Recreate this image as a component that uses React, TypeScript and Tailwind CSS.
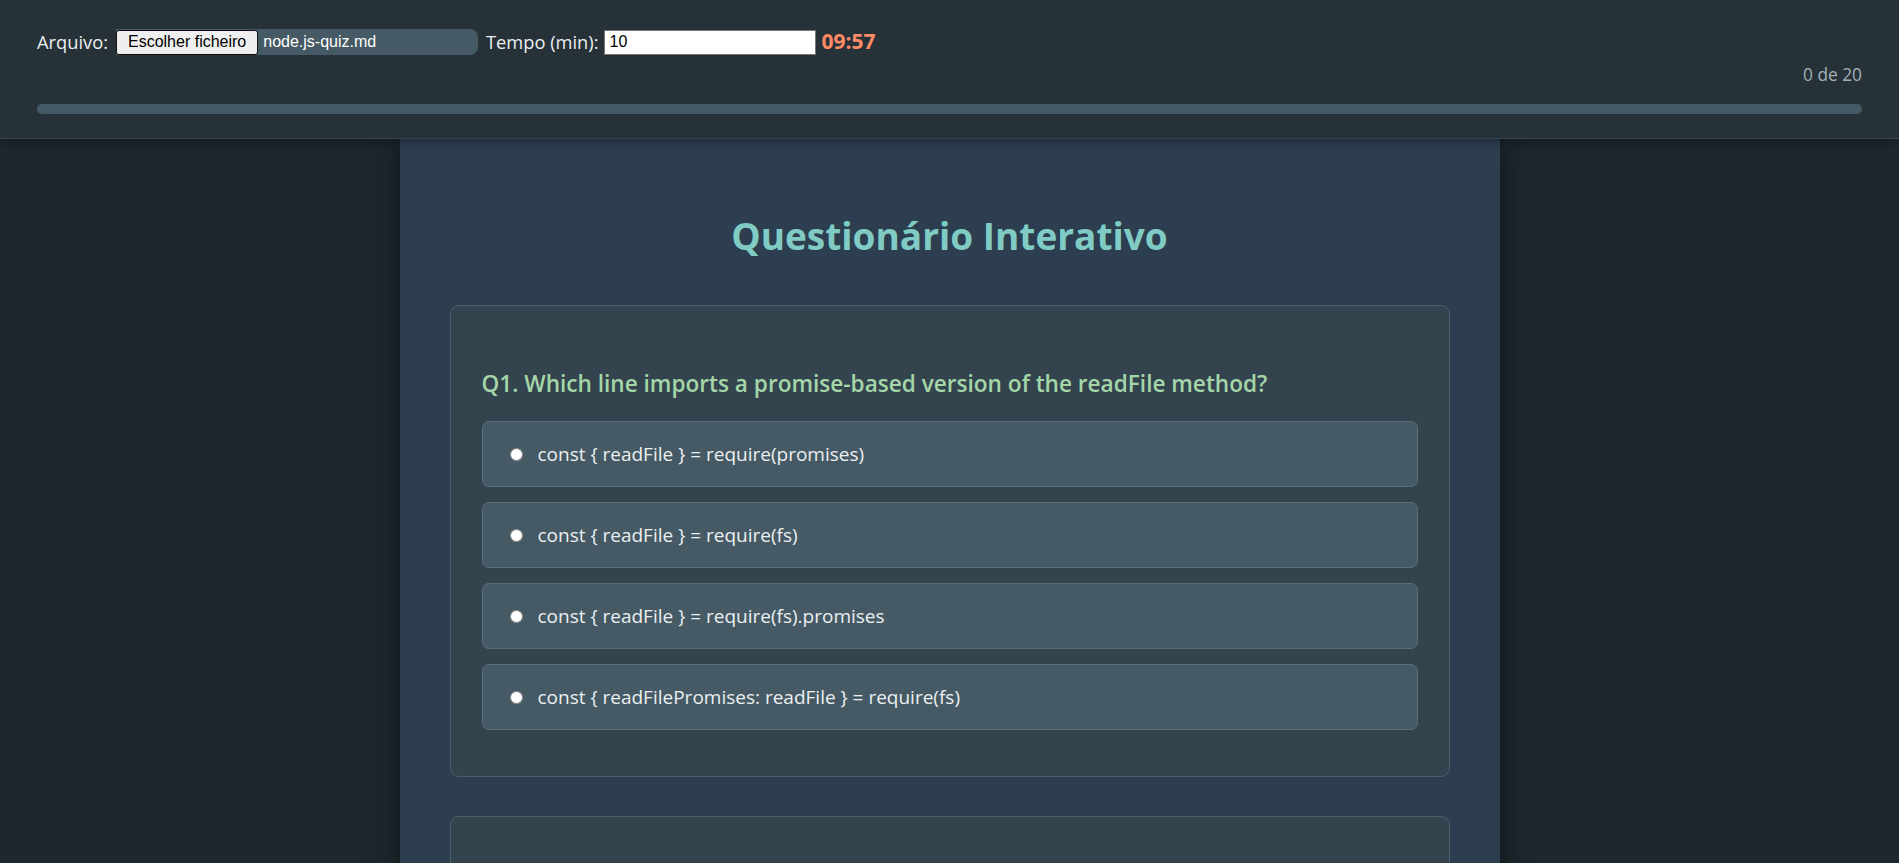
import { useState } from 'react'

const questions = [
  {
    id: 1,
    text: 'Which line imports a promise-based version of the readFile method?',
    options: [
      'const { readFile } = require(promises)',
      'const { readFile } = require(fs)',
      'const { readFile } = require(fs).promises',
      'const { readFilePromises: readFile } = require(fs)',
    ],
  },
  {
    id: 2,
    text: 'Which argument comes first in an error-first callback?',
    options: [
      'The error object',
      'The result value',
      'The callback itself',
      'None of the above',
    ],
  },
]

export default function App() {
  const [answers, setAnswers] = useState<Record<number, number>>({})

  return (
    <div className="min-h-screen bg-[#1d272d] font-['Open_Sans',sans-serif]">
      {/* Top bar */}
      <header className="relative z-10 border-b border-[#37474f] bg-[#263238] px-[37px] pt-[29px] pb-[24px] shadow-[0_2px_12px_rgba(0,0,0,0.35)]">
        <div className="flex h-[26px] items-center">
          <span className="text-[18.3px] text-[#eceff1]">Arquivo:</span>
          <div className="ml-[8px] flex h-[26px] w-[362px] items-center rounded-r-[8px] bg-[#455a64] font-['Liberation_Sans',Arial,sans-serif] text-[16px]">
            <span className="flex h-[25px] items-center rounded-[3px] border border-[#111] bg-[#efefef] px-[11px] text-black">
              Escolher ficheiro
            </span>
            <span className="ml-[5px] text-white">node.js-quiz.md</span>
          </div>
          <span className="ml-[8px] text-[18.3px] text-[#eceff1]">Tempo (min):</span>
          <input
            type="number"
            defaultValue={10}
            className="ml-[5px] h-[25px] w-[212px] border border-[#767676] bg-white px-[5px] font-['Liberation_Sans',Arial,sans-serif] text-[16px] text-black outline-none"
          />
          <span className="ml-[6px] text-[21px] font-bold text-[#ff8a65]">09:57</span>
        </div>
        <div className="mt-[8px] text-right text-[17.3px] leading-[24px] text-[#a3b1b8]">0 de 20</div>
        <div className="mt-[17px] h-[10px] w-full rounded-full bg-[#455a64]"></div>
      </header>

      {/* Quiz container */}
      <main className="mx-auto w-[1100px] bg-[#2c3e50] px-[50px] pt-[73px] pb-[40px] shadow-[0_0_30px_rgba(0,0,0,0.45)]">
        <h1 className="mb-[45px] text-center text-[37px] leading-[48px] font-bold text-[#80cbc4]">
          Questionário Interativo
        </h1>

        <div className="flex flex-col gap-[39px]">
          {questions.map((q) => (
            <div key={q.id} className="rounded-[9px] border border-[#4b5f69] bg-[#33444f] p-[31px]">
              <h3 className="mt-[32px] mb-[22px] text-[22.6px] leading-[30px] font-semibold text-[#a5d6a7]">
                Q{q.id}. {q.text}
              </h3>
              {q.options.map((opt, idx) => (
                <label
                  key={idx}
                  className="mb-[15px] flex cursor-pointer items-center rounded-[7px] border border-[#587079] bg-[#455a64] py-[18px] pl-[27px] text-[19px] leading-[28px] text-[#eceff1]"
                >
                  <input
                    type="radio"
                    name={`q${q.id}`}
                    checked={answers[q.id] === idx}
                    onChange={() => setAnswers({ ...answers, [q.id]: idx })}
                    className="m-0 h-[13px] w-[13px] shrink-0"
                  />
                  <span className="ml-[15px]">{opt}</span>
                </label>
              ))}
            </div>
          ))}
        </div>
      </main>
    </div>
  )
}
